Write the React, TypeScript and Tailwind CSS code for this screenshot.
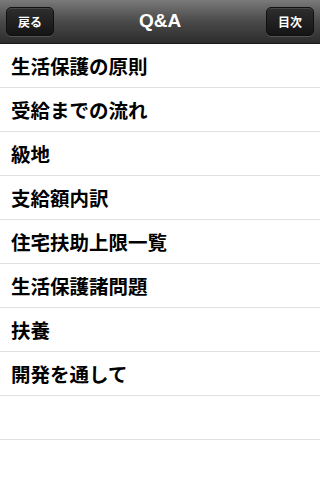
import React from "react";

const items = [
  "生活保護の原則",
  "受給までの流れ",
  "級地",
  "支給額内訳",
  "住宅扶助上限一覧",
  "生活保護諸問題",
  "扶養",
  "開発を通して",
  "",
  "",
];

function NavButton({ label }: { label: string }) {
  return (
    <div className="h-[29px] w-[48px] rounded-[5px] border border-[#111] bg-gradient-to-b from-[#2e2e2e] to-[#151515] shadow-[inset_0_1px_0_rgba(255,255,255,0.12),0_1px_0_rgba(255,255,255,0.15)] flex items-center justify-center text-white text-[12px] font-bold">
      {label}
    </div>
  );
}

export default function App() {
  return (
    <div
      className="w-[320px] h-[480px] overflow-hidden bg-white"
      style={{ fontFamily: '"Noto Sans CJK JP", "Liberation Sans", sans-serif' }}
    >
      <div className="h-[44px] bg-gradient-to-b from-[#7a7a7a] via-[#4a4a4a] to-[#2c2c2c] border-b border-[#1a1a1a] flex items-center justify-between px-[6px]">
        <NavButton label="戻る" />
        <div
          className="text-white text-[19px] font-bold"
          style={{ fontFamily: '"Liberation Sans", sans-serif' }}
        >
          Q&amp;A
        </div>
        <NavButton label="目次" />
      </div>
      <div className="flex flex-col">
        {items.map((t, i) => (
          <div
            key={i}
            className="h-[44px] border-b border-[#e0e0e0] flex items-center pl-[11px] text-[19.5px] font-bold text-black"
          >
            {t}
          </div>
        ))}
      </div>
    </div>
  );
}
